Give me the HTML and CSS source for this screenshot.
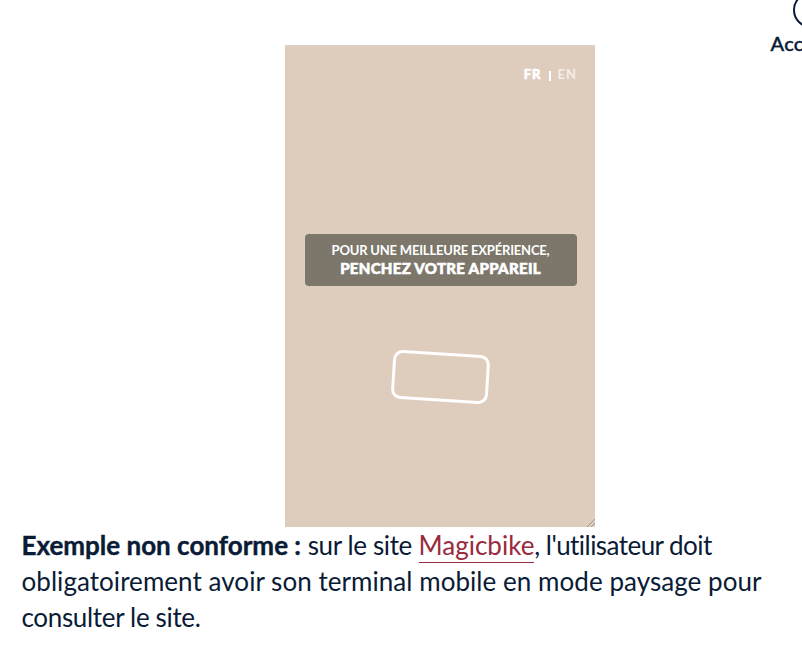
FILE: index.html
```html
<!DOCTYPE html>
<html lang="fr">
<head>
<meta charset="utf-8">
<title>Exemple non conforme</title>
<link rel="stylesheet" href="styles.css">
</head>
<body>
<a class="shortcut" href="#">
  <svg width="36" height="36" viewBox="0 0 36 36" aria-hidden="true"><circle cx="18" cy="18" r="17" fill="none" stroke="currentColor" stroke-width="2"/></svg>
  <span class="shortcut-label">Acc</span>
</a>
<main class="content">
  <figure class="phone">
    <div class="languages"><b class="active">FR</b><i class="divider"></i><span class="lang">EN</span></div>
    <div class="notice">
      <span class="notice-small">POUR UNE MEILLEURE EXPÉRIENCE,</span>
      <strong class="notice-strong">PENCHEZ VOTRE APPAREIL</strong>
    </div>
    <svg class="device" width="102" height="58" viewBox="0 0 102 58" aria-hidden="true"><rect x="4.5" y="6" width="94" height="46" rx="8" fill="none" stroke="#fff" stroke-width="3" transform="rotate(3.6 51.5 29)"/></svg>
    <svg class="grip" width="8" height="8" viewBox="0 0 8 8" aria-hidden="true"><path d="M0 8 8 0M4 8 8 4" stroke="#999" fill="none"/></svg>
  </figure>
  <p class="caption">
    <span class="line"><strong class="lead">Exemple non conforme :</strong> <span class="intro">sur le site</span> <a class="link" href="#">Magicbike</a><span class="rest">, l'utilisateur doit</span></span>
    <span class="line second">obligatoirement avoir son terminal mobile en mode paysage pour</span>
    <span class="line third">consulter le site.</span>
  </p>
</main>
</body>
</html>
```
FILE: styles.css
```css
body {
  margin: 0;
  height: 672px;
  overflow: hidden;
  background: #fff;
  color: #0a1b36;
  font-family: Lato, "Liberation Sans", sans-serif;
  font-variant-ligatures: none;
}
.shortcut {
  position: absolute;
  top: -8px;
  left: 770.5px;
  display: flex;
  flex-direction: column;
  color: inherit;
  text-decoration: none;
}
.shortcut svg { margin-left: 22px; }
.shortcut-label {
  margin-top: 3px;
  font-size: 20px;
  line-height: 24px;
  font-weight: 500;
  letter-spacing: 0.3px;
  -webkit-text-stroke: 0.4px currentColor;
}
.content { padding: 45px 20px 0 21.5px; }
.phone {
  position: relative;
  box-sizing: border-box;
  display: flex;
  flex-direction: column;
  align-items: center;
  width: 310px;
  height: 482px;
  margin: 0 0 0 263.5px;
  border-top: 1px solid #dbd0c9;
  background: #deccbc;
  color: #fff;
}
.languages {
  display: flex;
  align-items: center;
  align-self: flex-end;
  height: 16px;
  margin: 20px 18px 0 0;
  font-size: 13px;
}
.active { font-weight: 900; letter-spacing: 1px; -webkit-text-stroke: 0.6px #fff; }
.divider { width: 2px; height: 10px; margin: 3px 7px 0 7px; background: #fff; }
.lang { color: #f5eee8; font-weight: 700; letter-spacing: 1px; }
.notice {
  display: flex;
  flex-direction: column;
  align-items: center;
  box-sizing: border-box;
  width: 272px;
  height: 52px;
  margin: 152px 0 0 1px;
  padding-top: 8px;
  border-radius: 4px;
  background: #7c776a;
  white-space: nowrap;
}
.notice-small { font-size: 13px; line-height: 17px; font-weight: 700; letter-spacing: -0.2px; }
.notice-strong {
  font-size: 15px;
  line-height: 18px;
  font-weight: 900;
  letter-spacing: 0.3px;
  -webkit-text-stroke: 0.6px #fff;
}
.device { margin-top: 62px; }
.grip { position: absolute; right: 0; bottom: 0; }
.caption { margin: 0; font-size: 26px; line-height: 36px; }
.line { display: block; white-space: nowrap; }
.second { letter-spacing: 0.05px; }
.third { letter-spacing: -0.33px; }
.lead { font-weight: 700; -webkit-text-stroke: 0.4px currentColor; }
.intro { letter-spacing: -0.38px; }
.rest { letter-spacing: -0.55px; }
.link {
  display: inline-block;
  box-sizing: border-box;
  height: 36px;
  border-bottom: 1px solid #992b3e;
  color: #992b3e;
  text-decoration: none;
}
```
